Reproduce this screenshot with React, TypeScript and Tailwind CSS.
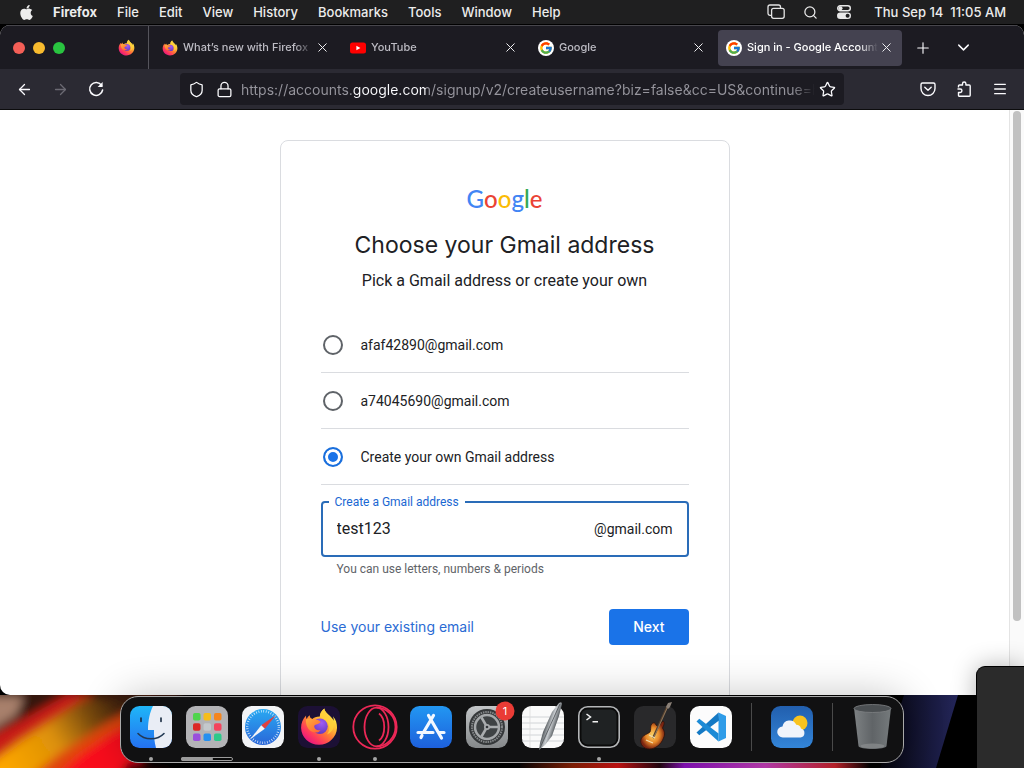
import { useState } from "react";
import type { ReactNode } from "react";
import {
  ArrowLeft,
  ArrowRight,
  ChevronDown,
  Lock,
  Menu,
  Plus,
  Search,
  Shield,
  Star,
  X,
} from "lucide-react";
import { FaApple } from "react-icons/fa";
import { FcGoogle } from "react-icons/fc";

const MENUS = ["File", "Edit", "View", "History", "Bookmarks", "Tools", "Window", "Help"];

const ADDRESSES = ["afaf42890@gmail.com", "a74045690@gmail.com", "Create your own Gmail address"];

function FirefoxLogo({ className }: { className?: string }) {
  return (
    <svg viewBox="0 0 32 32" className={className} aria-hidden="true">
      <defs>
        <linearGradient id="ffBody" x1="26" y1="4" x2="7" y2="28" gradientUnits="userSpaceOnUse">
          <stop offset="0" stopColor="#fff14a" />
          <stop offset="0.3" stopColor="#ffbd36" />
          <stop offset="0.55" stopColor="#ff7a35" />
          <stop offset="0.8" stopColor="#ff3a5c" />
          <stop offset="1" stopColor="#e81a7c" />
        </linearGradient>
        <linearGradient id="ffHead" x1="5" y1="8" x2="15" y2="20" gradientUnits="userSpaceOnUse">
          <stop offset="0" stopColor="#ffb53a" />
          <stop offset="1" stopColor="#ff6a35" />
        </linearGradient>
        <radialGradient id="ffGlobe" cx="0.6" cy="0.3" r="0.8">
          <stop offset="0" stopColor="#a05cf5" />
          <stop offset="1" stopColor="#5a35b8" />
        </radialGradient>
      </defs>
      <path
        fill="url(#ffBody)"
        d="M20.3 1.2c-2.6 2-3.6 4.4-3.6 6.6-3 .1-5 .9-6.2 2.1C9.3 9.6 8.3 8.3 8.4 6.8 7.3 7.5 6.5 8.6 6 9.8 5.4 9.2 5.3 8 5.4 6.9 2.7 9.6 1.2 13.3 1.3 17.2 1.6 25 8 31 16 31s14.5-6.2 14.8-14c.1-3.1-1-7.2-3.4-9.4.5 1.3.7 2.5.7 3.6C26.2 6.9 21.4 6 20.3 1.2z"
      />
      <circle cx="16.8" cy="15.8" r="6.4" fill="url(#ffGlobe)" />
      <path
        fill="url(#ffHead)"
        d="M5.3 10.2c2-.9 4.3-1 6.5.2 1.7-.3 4 .4 5.6 1.9-1.1 1.1-2.5 1.9-4.2 2.3-.9.3-1.3 1-1 2 .6 1.9 2.7 2.9 5.2 2.2-1.1 1.9-3.8 2.7-6.4 1.8C7.2 19.2 4.9 14.8 5.3 10.2z"
      />
      <path
        fill="#ffd03b"
        opacity="0.8"
        d="M20.3 1.2c1.1 4.8 7 6.8 7.8 12 .7 5-2.3 8.3-5.6 9.4 2.1-2.5 2.7-6.3.8-9.7-1.7-2.8-5.2-3.6-6.6-5.1 0-2.2 1-4.6 3.6-6.6z"
      />
    </svg>
  );
}

function GoogleBadge() {
  return (
    <span className="flex size-4 items-center justify-center rounded-full bg-white">
      <FcGoogle size={14} />
    </span>
  );
}

function YouTubeIcon() {
  return (
    <svg viewBox="0 0 16 16" className="size-4" aria-hidden="true">
      <rect y="2.5" width="16" height="11" rx="2.5" fill="#f00" />
      <path d="M6.4 5.7v4.6L10.4 8z" fill="#fff" />
    </svg>
  );
}

function MenuBar() {
  return (
    <header className="flex h-6 shrink-0 items-center justify-between bg-[#1f1f20] px-[18px] text-[13px] leading-6 font-medium text-[#ececec]">
      <nav className="flex items-center gap-5" aria-label="Menu bar">
        <button aria-label="Apple menu" className="w-[15px]">
          <FaApple size={17} />
        </button>
        <button className="font-bold">Firefox</button>
        {MENUS.map((name) => (
          <button key={name}>{name}</button>
        ))}
      </nav>
      <div className="flex items-center gap-[18px]">
        <svg viewBox="0 0 18 16" className="h-4 w-[18px]" fill="none" stroke="#e4e4e4" strokeWidth="1.3" aria-hidden="true">
          <path d="M4.3 11.3H3a2 2 0 0 1-2-2V3a2 2 0 0 1 2-2h8.5a2 2 0 0 1 2 2v1" />
          <rect x="4.6" y="4.3" width="12.6" height="10" rx="2" />
        </svg>
        <button aria-label="Search">
          <Search size={15} strokeWidth={2} />
        </button>
        <svg viewBox="0 0 16 16" className="mr-1 size-4" aria-hidden="true">
          <rect x="1.7" y="1.7" width="12.6" height="5" rx="2.5" fill="none" stroke="#e8e8e8" strokeWidth="1.4" />
          <circle cx="4.5" cy="4.2" r="2" fill="#e8e8e8" />
          <rect x="1" y="8.5" width="14" height="6.5" rx="3.25" fill="#e8e8e8" />
          <circle cx="11.6" cy="11.7" r="2" fill="#1f1f20" />
        </svg>
        <time className="whitespace-pre">Thu Sep 14  11:05 AM</time>
      </div>
    </header>
  );
}

function Tab({ icon, title, active = false }: { icon: ReactNode; title: string; active?: boolean }) {
  return (
    <div
      className={
        active
          ? "flex h-9 max-w-[184px] min-w-0 flex-1 items-center rounded bg-[#444250] pr-2 pl-2 text-white"
          : "flex h-9 max-w-[184px] min-w-0 flex-1 items-center rounded pr-2 pl-2 text-[#bdbcc4]"
      }
    >
      <button
        role="tab"
        aria-selected={active}
        className="flex min-w-0 flex-1 items-center gap-[5px] text-left text-[11px] font-medium"
      >
        <span className="shrink-0">{icon}</span>
        <span className="min-w-0 flex-1 overflow-hidden whitespace-nowrap [mask-image:linear-gradient(to_right,black_85%,transparent)]">
          {title}
        </span>
      </button>
      <button aria-label={`Close ${title}`} className="flex w-4 shrink-0 justify-center text-[#ededf0]">
        <X size={15} strokeWidth={1.6} />
      </button>
    </div>
  );
}

function TabStrip() {
  return (
    <div className="flex h-11 items-center border-t border-[#47464c] bg-[#1c1b22] pl-[13px] text-[#fbfbfe]">
      <div className="flex w-[105px] shrink-0 items-center gap-2">
        <span className="size-3 rounded-full bg-[#f45f57]" />
        <span className="size-3 rounded-full bg-[#f8bb2e]" />
        <span className="size-3 rounded-full bg-[#29c440]" />
      </div>
      <div role="tablist" className="flex h-full min-w-0 items-center">
        <button role="tab" aria-label="Pinned tab" aria-selected={false} className="mr-[13px] shrink-0">
          <FirefoxLogo className="size-[17px]" />
        </button>
        <span className="mr-[5px] h-full w-px shrink-0 bg-[#55545c]" />
        <div className="flex w-[748px] min-w-0 gap-1">
          <Tab icon={<FirefoxLogo className="size-4" />} title="What’s new with Firefox" />
          <Tab icon={<YouTubeIcon />} title="YouTube" />
          <Tab icon={<GoogleBadge />} title="Google" />
          <Tab icon={<GoogleBadge />} title="Sign in - Google Account" active />
        </div>
      </div>
      <button aria-label="New tab" className="ml-3">
        <Plus size={18} strokeWidth={1.5} />
      </button>
      <button aria-label="List all tabs" className="ml-[22px]">
        <ChevronDown size={19} strokeWidth={1.8} />
      </button>
    </div>
  );
}

function NavBar() {
  return (
    <div className="flex h-[41px] items-center justify-between border-b border-[#0c0c0d] bg-[#2b2a33] px-4 text-[#fbfbfe]">
      <div className="flex shrink-0 gap-[19px]">
        <button aria-label="Back">
          <ArrowLeft size={17} strokeWidth={1.8} />
        </button>
        <button aria-label="Forward" className="text-[#6b6a73]">
          <ArrowRight size={17} strokeWidth={1.8} />
        </button>
        <button aria-label="Reload">
          <svg viewBox="0 0 16 16" className="size-4" fill="none" stroke="currentColor" strokeWidth="1.5" strokeLinecap="round">
            <path d="M13.6 4.3A6.5 6.5 0 1 0 14.6 9" />
            <path d="M14.6 1v5H9.6z" fill="currentColor" stroke="none" />
          </svg>
        </button>
      </div>
      <div className="mx-[76px] flex h-8 min-w-0 flex-1 items-center rounded bg-[#1c1b22] px-2">
        <Shield size={17} strokeWidth={1.8} className="shrink-0" />
        <Lock size={17} strokeWidth={1.8} className="ml-[11px] shrink-0" />
        <input
          aria-label="Address"
          defaultValue="https://accounts.google.com/signup/v2/createusername?biz=false&cc=US&continue=https"
          className="ml-2 min-w-0 flex-1 bg-[linear-gradient(to_right,#96959d_111px,#fbfbfe_111px,#fbfbfe_185px,#96959d_185px)] bg-clip-text text-[14px] text-transparent outline-none [mask-image:linear-gradient(to_right,black_96%,transparent)]"
        />
        <button aria-label="Bookmark this page" className="ml-1">
          <Star size={17} strokeWidth={1.8} />
        </button>
      </div>
      <div className="flex shrink-0 items-center gap-5">
        <button aria-label="Save to Pocket">
          <svg viewBox="0 0 16 16" className="size-4" fill="none" stroke="currentColor" strokeWidth="1.4" strokeLinecap="round" strokeLinejoin="round">
            <path d="M2.5 2h11a1.5 1.5 0 0 1 1.5 1.5V7.5a7 7 0 0 1-14 0V3.5A1.5 1.5 0 0 1 2.5 2z" />
            <path d="M4.8 6.3 8 9.3l3.2-3" />
          </svg>
        </button>
        <button aria-label="Extensions">
          <svg viewBox="0 0 16 16" className="size-4" fill="none" stroke="currentColor" strokeWidth="1.4" strokeLinejoin="round">
            <path d="M2.5 6.5V5A1 1 0 0 1 3.5 4H6.5V2.7a1.7 1.7 0 0 1 3.4 0V4h3.3a1 1 0 0 1 1 1v9.2a1 1 0 0 1-1 1H3.5a1 1 0 0 1-1-1v-2.7h1.7a1.7 1.7 0 0 0 0-3.5H1.5" />
          </svg>
        </button>
        <button aria-label="Open application menu">
          <Menu size={16} strokeWidth={2} />
        </button>
      </div>
    </div>
  );
}

function SignupCard() {
  const [choice, setChoice] = useState(ADDRESSES[2]);
  const [address, setAddress] = useState("test123");

  return (
    <main className="mx-auto mt-[30px] w-full max-w-[450px] shrink-0 self-start rounded-lg border border-[#dadce0] px-10 pt-12 pb-24 font-['Roboto',sans-serif] text-[#202124]">
      <div className="flex h-6 justify-center font-['Lato',sans-serif] text-[24px] leading-5 font-medium">
        <span className="text-[#4285f4]">G</span>
        <span className="text-[#ea4335]">o</span>
        <span className="text-[#fbbc05]">o</span>
        <span className="text-[#4285f4]">g</span>
        <span className="text-[#34a853]">l</span>
        <span className="text-[#ea4335]">e</span>
      </div>
      <h1 className="mt-4 text-center font-['Inter',sans-serif] text-[23px] leading-8">Choose your Gmail address</h1>
      <p className="mt-2 text-center text-base leading-6">Pick a Gmail address or create your own</p>

      <form onSubmit={(e) => e.preventDefault()}>
        <div className="mt-6" role="radiogroup" aria-label="Gmail address">
          {ADDRESSES.map((name) => (
            <label key={name} className="flex h-14 items-center gap-[18px] border-b border-[#dadce0] pl-0.5 text-sm">
              <input
                type="radio"
                name="address"
                checked={choice === name}
                onChange={() => setChoice(name)}
                className="size-5 shrink-0 appearance-none rounded-full border-2 border-[#5f6368] checked:border-[#1a6fdc] checked:bg-[#1a73e8] checked:shadow-[inset_0_0_0_3px_white]"
              />
              {name}
            </label>
          ))}
        </div>

        <div className="relative mt-4 flex h-14 items-center rounded border-2 border-[#2a6cb8] px-3.5">
          <label htmlFor="username" className="absolute -top-[9px] left-1.5 bg-white px-1.5 text-xs leading-4 text-[#1a67d2]">
            Create a Gmail address
          </label>
          <input
            id="username"
            value={address}
            onChange={(e) => setAddress(e.target.value)}
            className="min-w-0 flex-1 bg-transparent text-base leading-6 outline-none"
          />
          <span className="text-sm">@gmail.com</span>
        </div>
        <p className="mt-1 pl-4 text-xs leading-4 text-[#5f6368]">You can use letters, numbers &amp; periods</p>

        <div className="mt-8 flex items-center justify-between font-['Inter',sans-serif] text-sm">
          <a href="#existing" className="text-[#2a6bd4]">
            Use your existing email
          </a>
          <button type="submit" className="h-9 rounded bg-[#1a73e8] px-6 font-medium text-white">
            Next
          </button>
        </div>
      </form>
    </main>
  );
}

function DockItem({
  label,
  running = false,
  children,
}: {
  label: string;
  running?: boolean;
  children: ReactNode;
}) {
  return (
    <button aria-label={label} className="relative size-[42px] shrink-0">
      <svg viewBox="0 0 42 42" className="size-full overflow-visible" aria-hidden="true">
        {children}
      </svg>
      {running && <span className="absolute -bottom-[13px] left-[19px] size-1 rounded-full bg-[#a5a5a5]" />}
    </button>
  );
}

const LAUNCHPAD_COLORS = [
  "#4fd44c",
  "#f6bd1c",
  "#f5861f",
  "#dc2626",
  "#c4c8cc",
  "#f4435c",
  "#9a4fdc",
  "#2590f0",
  "#2cc98a",
];

function Divider() {
  return <span className="mx-[5px] h-12 w-px shrink-0 bg-[#4a4a4a]" />;
}

function Dock() {
  return (
    <nav
      aria-label="Dock"
      className="relative flex h-[67px] items-center gap-[14px] rounded-[18px] border border-[#a9a9a9] bg-[#111112] px-[9px] pb-[5px] shadow-[0_0_40px_rgba(0,0,0,0.24)]"
    >
      <DockItem label="Finder" running>
        <defs>
          <linearGradient id="finder" x1="0" y1="0" x2="0" y2="1">
            <stop offset="0" stopColor="#1fb6f8" />
            <stop offset="1" stopColor="#2471f0" />
          </linearGradient>
          <clipPath id="tile">
            <rect width="42" height="42" rx="9.5" />
          </clipPath>
        </defs>
        <rect width="42" height="42" rx="9.5" fill="url(#finder)" />
        <g clipPath="url(#tile)">
          <path d="M23 0c-3 6-5 14-5 24h6c-.2 6 .4 12 2 18h16V0z" fill="#e9edf5" />
        </g>
        <path d="M11 12v3.5M31 12v3.5" stroke="#17293f" strokeWidth="1.6" strokeLinecap="round" />
        <path d="M8 27.5c6.5 7 19.5 7 26 0" fill="none" stroke="#223a55" strokeWidth="1.6" strokeLinecap="round" />
      </DockItem>

      <DockItem label="Launchpad">
        <rect width="42" height="42" rx="9.5" fill="#b3b3b6" />
        {LAUNCHPAD_COLORS.map((color, i) => (
          <rect key={color} x={7 + (i % 3) * 10.5} y={7 + Math.floor(i / 3) * 10.3} width="7.5" height="7.5" rx="1.8" fill={color} />
        ))}
        <rect x="-4.5" y="51.5" width="51" height="3" rx="1.5" fill="#080808" stroke="#9b9b9b" />
        <rect x="-5" y="51" width="32" height="4" rx="2" fill="#9b9b9b" />
      </DockItem>

      <DockItem label="Safari">
        <defs>
          <linearGradient id="compass" x1="0" y1="0" x2="0" y2="1">
            <stop offset="0" stopColor="#29a9f2" />
            <stop offset="1" stopColor="#2a66d8" />
          </linearGradient>
        </defs>
        <rect width="42" height="42" rx="9.5" fill="#f3f4f6" />
        <circle cx="21" cy="21" r="18" fill="url(#compass)" />
        <circle cx="21" cy="21" r="15.8" fill="none" stroke="#fff" strokeWidth="2.4" strokeDasharray="0.7 1.78" opacity="0.85" />
        <path d="M34 9 22.8 22.8 19.2 19.2z" fill="#e0403f" />
        <path d="M8 33.5 19.2 19.2l3.6 3.6z" fill="#f5f5f7" />
      </DockItem>

      <DockItem label="Firefox" running>
        <rect width="42" height="42" rx="9.5" fill="#1c1035" />
        <svg x="1.5" y="1" width="39" height="39">
          <FirefoxLogo />
        </svg>
      </DockItem>

      <DockItem label="Opera" running>
        <g fill="none" stroke="#ec2857" strokeWidth="1.8">
          <circle cx="21" cy="21" r="21.7" />
          <ellipse cx="22.5" cy="21" rx="12" ry="19.3" />
          <path d="M22.500 1.700c10 0 19 8.300 19 19.300s-9 19.300-19 19.300" />
          <path d="M25 7.500c7 5 7 22 0 27" />
        </g>
      </DockItem>

      <DockItem label="App Store">
        <defs>
          <linearGradient id="store" x1="0" y1="0" x2="0" y2="1">
            <stop offset="0" stopColor="#2297f2" />
            <stop offset="1" stopColor="#1d60dc" />
          </linearGradient>
        </defs>
        <rect width="42" height="42" rx="9.5" fill="url(#store)" />
        <g stroke="#f3f8ff" strokeWidth="3.2" strokeLinecap="round">
          <path d="M23.5 9.5 14 25.5M18.5 9.5 31.5 32M8 26.5h15M29.5 26.5H34M12 29.5l-1 2" />
        </g>
      </DockItem>

      <DockItem label="System Preferences">
        <defs>
          <linearGradient id="prefs" x1="0" y1="0" x2="0" y2="1">
            <stop offset="0" stopColor="#c2c5c7" />
            <stop offset="1" stopColor="#85888a" />
          </linearGradient>
        </defs>
        <rect width="42" height="42" rx="9.5" fill="url(#prefs)" />
        <circle cx="21" cy="21" r="18" fill="#35383a" />
        <circle cx="21" cy="21" r="15" fill="#35383a" stroke="#85888a" strokeWidth="2" strokeDasharray="1.5 0.86" />
        <circle cx="21" cy="21" r="12" fill="#3e4244" stroke="#a5a8aa" strokeWidth="2.5" />
        <path d="M21 21h11M21 21l-5.5-9.5M21 21l-5.5 9.5" stroke="#a9acae" strokeWidth="2.5" />
        <circle cx="21" cy="21" r="3" fill="#a9acae" />
        <circle cx="21" cy="21" r="1.3" fill="#33363a" />
        <circle cx="39" cy="5" r="9.5" fill="#ea3b35" />
        <text x="39" y="9" textAnchor="middle" fontSize="11" fill="#fff">
          1
        </text>
      </DockItem>

      <DockItem label="TextEdit">
        <defs>
          <linearGradient id="pen" x1="0.35" y1="0.4" x2="0.65" y2="0.6">
            <stop offset="0" stopColor="#5f6468" />
            <stop offset="0.5" stopColor="#c8ccd0" />
            <stop offset="1" stopColor="#5f6468" />
          </linearGradient>
        </defs>
        <rect width="42" height="42" rx="9.5" fill="#fafafa" />
        <path d="M0 11h42M0 17h42M0 23h42M0 29h42M0 35h42" stroke="#c6cace" strokeWidth="0.8" />
        <path d="M8 0v42" stroke="#dcdcdc" strokeWidth="0.8" />
        <path d="M37-3q3-2 3 1l-3 12-7 20-7 9-6 5 1-7 3-11 9-20z" fill="url(#pen)" />
        <path d="M38-2 23 31l-5.500 12" fill="none" stroke="#4c5154" strokeWidth="0.8" />
      </DockItem>

      <DockItem label="Terminal" running>
        <rect x="0.8" y="0.8" width="40.4" height="40.4" rx="9" fill="#0a0a0a" stroke="#b4b6b8" strokeWidth="1.6" />
        <rect x="3.5" y="3.5" width="35" height="35" rx="6" fill="#1f2223" />
        <path d="m8.5 8 4 3-4 3M14.5 15.8H20" fill="none" stroke="#f2f2f2" strokeWidth="1.5" />
      </DockItem>

      <DockItem label="GarageBand">
        <defs>
          <radialGradient id="guitar">
            <stop offset="0" stopColor="#f9d56a" />
            <stop offset="0.55" stopColor="#e98a2a" />
            <stop offset="1" stopColor="#7a2410" />
          </radialGradient>
        </defs>
        <rect width="42" height="42" rx="9.5" fill="#29292b" />
        <path
          d="M17 19c2-3 4-3 5 0 2 3 4-1 7-4 2 1 1 4-.5 7 2 3 3 6 1 10-2 6-8 11-14 11-6 0-10-5-8.500-10 1.500-4 7-5 9-7 1-2 .5-5 1-7z"
          fill="url(#guitar)"
          stroke="#2d120a"
          strokeWidth="0.8"
        />
        <path d="M34-1 19 32" stroke="#54402f" strokeWidth="2" />
        <path d="M34.5-1 20 31" stroke="#b59a78" strokeWidth="0.6" />
        <path d="m32 1 2-4 4-1-2 5-2 2z" fill="#8b8178" />
        <path d="m12 34 7 3M15 29l6 3" stroke="#f1ddb0" strokeWidth="1.2" />
      </DockItem>

      <DockItem label="Visual Studio Code">
        <rect width="42" height="42" rx="9.5" fill="#fcfcfc" />
        <path d="M28.5 6.5 36 10v22l-7.5 3.5z" fill="#2f9ce8" />
        <path d="M28.5 6.5 6.5 26.5l2.8 2.8L29 14.5z" fill="#1479c4" />
        <path d="m6.5 15.5 22 20V27.5L9.3 12.7z" fill="#1c8bd6" />
      </DockItem>

      <Divider />

      <DockItem label="Weather">
        <defs>
          <linearGradient id="sky" x1="0" y1="0" x2="0" y2="1">
            <stop offset="0" stopColor="#225fae" />
            <stop offset="1" stopColor="#3385d8" />
          </linearGradient>
        </defs>
        <rect width="42" height="42" rx="9.5" fill="url(#sky)" />
        <circle cx="29" cy="17" r="7.5" fill="#f9c31f" />
        <path
          d="M12 31.5a5.5 5.5 0 0 1-.5-11 7.3 7.3 0 0 1 13.8-1.7 5 5 0 0 1 4.7 3.7 4.6 4.6 0 0 1-.5 9z"
          fill="#f0f4fb"
        />
      </DockItem>

      <Divider />

      <DockItem label="Trash">
        <defs>
          <linearGradient id="can" x1="0" y1="0" x2="1" y2="0">
            <stop offset="0" stopColor="#7d8183" />
            <stop offset="0.5" stopColor="#606467" />
            <stop offset="1" stopColor="#757a7c" />
          </linearGradient>
        </defs>
        <path d="M2 2h37l-4.5 38c-.5 4-27.5 4-28 0z" fill="url(#can)" />
        <ellipse cx="20.5" cy="2.5" rx="18.5" ry="4" fill="#4b4f52" stroke="#7f8284" strokeWidth="0.8" />
        <ellipse cx="20.5" cy="40" rx="12" ry="2.5" fill="#8b8e90" opacity="0.7" />
      </DockItem>
    </nav>
  );
}

function Wallpaper() {
  return (
    <svg
      viewBox="0 0 1024 73"
      preserveAspectRatio="none"
      className="absolute inset-0 size-full"
      aria-hidden="true"
    >
      <defs>
        <filter id="soft" x="-10%" y="-30%" width="120%" height="160%">
          <feGaussianBlur stdDeviation="5" />
        </filter>
        <linearGradient id="band" x1="0" y1="73" x2="115" y2="0" gradientUnits="userSpaceOnUse">
          <stop offset="0" stopColor="#ffa800" />
          <stop offset="0.45" stopColor="#dc9008" />
          <stop offset="0.75" stopColor="#7c4c0c" />
          <stop offset="1" stopColor="#3e200a" />
        </linearGradient>
        <linearGradient id="glow" x1="0" x2="1">
          <stop offset="0" stopColor="#0a0505" />
          <stop offset="0.15" stopColor="#8a2205" />
          <stop offset="0.28" stopColor="#d01414" />
          <stop offset="0.4" stopColor="#240510" />
          <stop offset="0.47" stopColor="#8b12c0" />
          <stop offset="0.7" stopColor="#c43fb8" />
          <stop offset="0.9" stopColor="#c9252d" />
          <stop offset="1" stopColor="#000" />
        </linearGradient>
        <linearGradient id="wedge" x1="0" x2="1">
          <stop offset="0" stopColor="#03030a" />
          <stop offset="1" stopColor="#24265a" />
        </linearGradient>
      </defs>
      <rect width="1024" height="73" fill="#000" />
      <g filter="url(#soft)">
        <path d="M-20-20h200v50L-20 80z" fill="#34170f" />
        <path d="M-20 2h44L16 20-20 42z" fill="#a8806c" />
        <path d="M-20 46 20 26 66 0h28L40 38-20 74z" fill="#c81c12" />
        <path d="M-20 76 20 46 84 4h66v10L60 64 20 95h-40z" fill="url(#band)" />
        <path d="M20 90 60 58 110 26 150 6v24L90 60 60 90z" fill="#e0440c" />
        <path d="M44 92 80 60 112 38l40-18v30L124 90z" fill="#fa0a1c" />
        <path d="M112 92 130 66l40 10v20z" fill="#200405" />
      </g>
      <rect x="520" y="66" width="350" height="7" fill="url(#glow)" />
      <path d="M904 0h54l-22 73H880z" fill="url(#wedge)" />
    </svg>
  );
}

export default function App() {
  return (
    <div className="relative flex h-screen flex-col overflow-hidden bg-black font-['Inter',sans-serif]">
      <MenuBar />
      <section className="mt-px flex min-h-0 flex-1 flex-col overflow-hidden rounded-[10px] bg-white" aria-label="Firefox">
        <TabStrip />
        <NavBar />
        <div className="flex min-h-0 flex-1 overflow-hidden">
          <div className="flex min-w-0 flex-1 overflow-hidden">
            <SignupCard />
          </div>
          <div className="w-[15px] shrink-0 border-l border-[#e4e4e4] bg-[#fafafa] px-[3px] pt-px">
            <div className="h-[510px] max-h-[88%] rounded-full bg-[#c1c1c1]" />
          </div>
        </div>
      </section>
      <footer className="relative flex h-[73px] shrink-0 justify-center pt-px">
        <Wallpaper />
        <Dock />
      </footer>
      <aside
        aria-label="Minimised window"
        className="absolute right-0 bottom-0 h-[102px] w-12 rounded-tl-[9px] border-t border-l border-black bg-[#2b2b2b] shadow-[0_0_24px_rgba(0,0,0,0.3)]"
      />
    </div>
  );
}
